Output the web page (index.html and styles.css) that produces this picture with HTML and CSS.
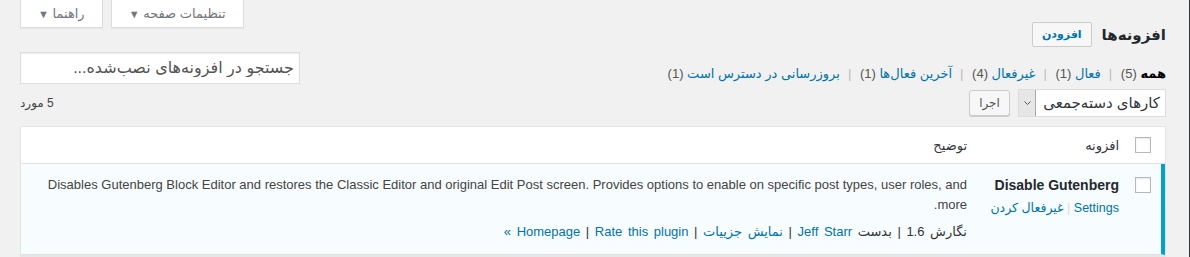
FILE: index.html
```html
<!doctype html>
<html lang="fa" dir="rtl">
  <head>
    <meta charset="UTF-8" />
    <title>افزونه‌ها</title>
    <link rel="stylesheet" href="styles.css">
  </head>
  <body>
    <div class="page">
      <div class="top">
        <h1 class="title">افزونه‌ها <a href="#" class="title-action">افزودن</a></h1>
        <div class="screen-meta">
          <button class="meta-btn">تنظیمات صفحه <span class="caret">▼</span></button>
          <button class="meta-btn">راهنما <span class="caret">▼</span></button>
        </div>
      </div>

      <div class="filters">
        <ul class="subsubsub">
          <li><a href="#" class="current">همه <span class="count">(5)</span></a> |</li>
          <li><a href="#">فعال <span class="count">(1)</span></a> |</li>
          <li><a href="#">غیرفعال <span class="count">(4)</span></a> |</li>
          <li><a href="#">آخرین فعال‌ها <span class="count">(1)</span></a> |</li>
          <li><a href="#">بروزرسانی در دسترس است <span class="count">(1)</span></a></li>
        </ul>
        <input type="search" class="search" placeholder="جستجو در افزونه‌های نصب‌شده...">
      </div>

      <div class="tablenav">
        <div class="bulk">
          <div class="select">
            <span class="select-text">کارهای دسته‌جمعی</span>
            <span class="select-arrow">
              <svg width="7" height="4" viewBox="0 0 7 4"><path d="M0.5 0.5 L3.5 3.5 L6.5 0.5" fill="none" stroke="#555" stroke-width="1"/></svg>
            </span>
          </div>
          <button class="apply">اجرا</button>
        </div>
        <span class="items">5 مورد</span>
      </div>

      <table class="plugins">
        <thead>
          <tr>
            <td class="check-col"><input type="checkbox"></td>
            <th class="col-name">افزونه</th>
            <th class="col-desc">توضیح</th>
          </tr>
        </thead>
        <tbody>
          <tr class="active">
            <th class="check-col"><input type="checkbox"></th>
            <td class="col-name">
              <strong class="plugin-name">Disable Gutenberg</strong>
              <div class="row-actions">
                <a href="#">Settings</a> <span class="sep">|</span> <a href="#">غیرفعال کردن</a>
              </div>
            </td>
            <td class="col-desc">
              <p class="desc">Disables Gutenberg Block Editor and restores the Classic Editor and original Edit Post screen. Provides options to enable on specific post types, user roles, and more.</p>
              <div class="meta">
                نگارش 1.6 | بدست <a href="#">Jeff Starr</a> | <a href="#">نمایش جزییات</a> | <a href="#">Rate this plugin</a> | <a href="#">Homepage »</a>
              </div>
            </td>
          </tr>
        </tbody>
      </table>
    </div>
  </body>
</html>
```

FILE: styles.css
```css
body {
  margin: 0;
  font-family: "Liberation Sans", "DejaVu Sans", sans-serif;
  font-size: 13px;
  color: #444;
  background: #f1f1f1;
}
a {
  color: #0073aa;
  text-decoration: none;
}
.page {
  box-sizing: border-box;
  min-height: 257px;
  padding: 0 23px 0 20px;
  border-right: 1px solid #32373c;
}

/* header */
.top {
  display: flex;
  justify-content: space-between;
  height: 47px;
}
.title {
  align-self: flex-end;
  display: flex;
  align-items: center;
  margin: 0;
  font-size: 15px;
  font-weight: bold;
  color: #23282d;
}
.title-action {
  margin-right: 10px;
  padding: 0 9px;
  height: 23px;
  line-height: 23px;
  border: 1px solid #ccc;
  border-radius: 2px;
  background: #f7f7f7;
  font-size: 11px;
  font-weight: bold;
}
.screen-meta {
  align-self: flex-start;
  display: flex;
  gap: 8px;
}
.meta-btn {
  height: 28px;
  padding: 0 17px;
  border: 1px solid #ddd;
  border-top: 0;
  background: #fff;
  box-shadow: 0 1px 1px rgba(0,0,0,0.04);
  font-family: inherit;
  font-size: 13px;
  color: #72777c;
}
.caret {
  font-size: 11px;
}

/* filters */
.filters {
  display: flex;
  justify-content: space-between;
  align-items: flex-start;
  margin-top: 5px;
}
.subsubsub {
  display: flex;
  margin: 12px 0 0;
  padding: 0;
  list-style: none;
  color: #bbb;
  line-height: 20px;
}
.subsubsub li {
  margin-left: 8px;
}
.subsubsub a {
  margin-left: 5px;
}
.subsubsub .current {
  color: #000;
  font-weight: bold;
}
.count {
  color: #555;
  font-weight: normal;
}
.search {
  box-sizing: border-box;
  width: 280px;
  height: 32px;
  padding: 0 5px;
  border: 1px solid #ddd;
  box-shadow: inset 0 1px 2px rgba(0,0,0,0.07);
  font-family: inherit;
  font-size: 16px;
}
.search::placeholder {
  color: #555;
}

/* tablenav */
.tablenav {
  display: flex;
  justify-content: space-between;
  align-items: center;
  margin-top: 5px;
  height: 28px;
}
.bulk {
  display: flex;
  align-items: center;
  gap: 8px;
}
.select {
  box-sizing: border-box;
  display: flex;
  width: 148px;
  height: 28px;
  border: 1px solid #ddd;
  background: #fff;
  font-size: 15px;
  color: #32373c;
}
.select-text {
  flex: 1;
  padding-right: 5px;
  line-height: 26px;
}
.select-arrow {
  width: 16px;
  display: flex;
  align-items: center;
  justify-content: center;
  background: #e6e6e6;
  border-right: 1px solid #aaa;
}
.apply {
  box-sizing: border-box;
  width: 41px;
  height: 26px;
  border: 1px solid #ccc;
  border-radius: 3px;
  background: #f7f7f7;
  box-shadow: 0 1px 0 #ccc;
  font-family: inherit;
  font-size: 12px;
  color: #555;
}
.items {
  font-size: 12px;
  color: #444;
}

/* table */
.plugins {
  width: 100%;
  margin-top: 9px;
  border: 1px solid #e5e5e5;
  border-spacing: 0;
  background: #fff;
  box-shadow: 0 1px 1px rgba(0,0,0,0.04);
  table-layout: fixed;
}
.plugins thead th,
.plugins thead td {
  height: 36px;
  padding: 0 10px;
  border-bottom: 1px solid #e1e1e1;
  text-align: right;
  font-weight: normal;
  color: #32373c;
}
.check-col {
  width: 36px;
  box-sizing: border-box;
  vertical-align: middle;
}
.plugins thead .check-col {
  padding: 0 14px 0 0;
}
.col-name {
  width: 152px;
  box-sizing: border-box;
}
input[type="checkbox"] {
  appearance: none;
  display: block;
  width: 16px;
  height: 16px;
  margin: 0;
  border: 1px solid #b4b9be;
  background: #fff;
  box-shadow: inset 0 1px 2px rgba(0,0,0,0.1);
}
.plugins tbody tr {
  background: #f7fcfe;
}
.plugins tbody td,
.plugins tbody th {
  padding: 11px 10px 12px;
  vertical-align: top;
  border-bottom: 1px solid #e1e1e1;
  text-align: right;
}
.plugins tbody .check-col {
  padding: 13px 10px 0 0;
  border-right: 4px solid #00a0d2;
}
.plugin-name {
  display: block;
  font-size: 14px;
  line-height: 20px;
  color: #23282d;
}
.row-actions {
  margin-top: 3px;
  color: #ddd;
  font-size: 12.5px;
  line-height: 20px;
  white-space: nowrap;
}
.desc {
  margin: 0;
  font-size: 13px;
  line-height: 20px;
  color: #444;
}
.meta {
  margin-top: 7px;
  line-height: 20px;
  word-spacing: 2px;
  color: #333;
}
.meta a {
  unicode-bidi: isolate;
}
```
